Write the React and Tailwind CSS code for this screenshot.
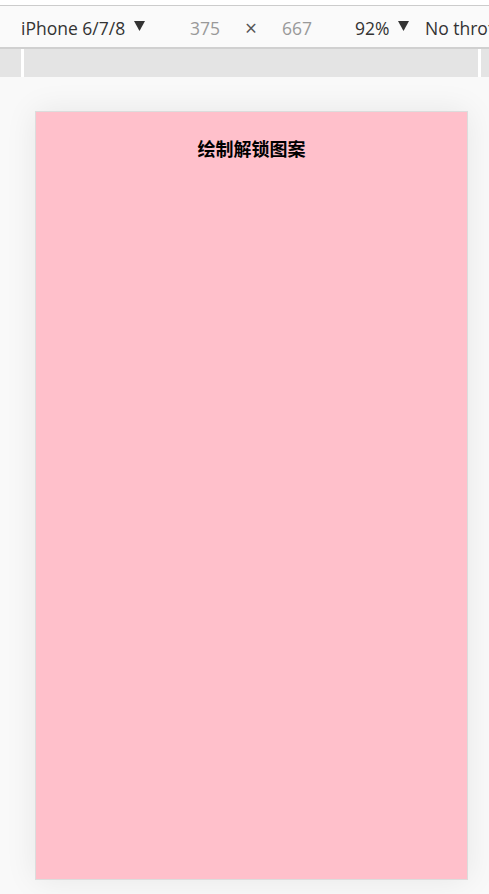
import React from "react";

function Tri() {
  return (
    <svg width="11" height="10" viewBox="0 0 11 10" className="inline-block ml-[9px] relative -top-[2px]">
      <polygon points="0,0 11,0 5.5,10" fill="#333" />
    </svg>
  );
}

export default function App() {
  return (
    <div className="w-[489px] h-[894px] overflow-hidden bg-[#f9f9f9] flex flex-col" style={{ fontFamily: '"Open Sans", "Noto Sans", sans-serif' }}>
      <div className="h-[5px] bg-white shrink-0" />
      <div className="h-[1px] bg-[#cccccc] shrink-0" />
      <div className="h-[41px] pt-[3px] bg-[#fafafa] shrink-0 flex items-center whitespace-nowrap text-[17.5px] text-[#333] overflow-hidden">
        <span className="ml-[21px] w-[169px] shrink-0 flex items-center">iPhone 6/7/8<Tri /></span>
        <span className="w-[55px] shrink-0 text-[#999]">375</span>
        <span className="w-[37px] shrink-0 text-[#555] text-[21px] leading-none">×</span>
        <span className="w-[73px] shrink-0 text-[#999]">667</span>
        <span className="w-[70px] shrink-0 flex items-center">92%<Tri /></span>
        <span className="shrink-0">No throttling</span>
      </div>
      <div className="h-[2px] bg-[#d0d0d0] shrink-0" />
      <div className="h-[28px] bg-[#e4e4e4] shrink-0 flex">
        <div className="w-[21px] shrink-0" />
        <div className="w-[3px] bg-white shrink-0" />
        <div className="flex-1" />
        <div className="w-[3px] bg-white shrink-0" />
        <div className="w-[8px] shrink-0" />
      </div>
      <div className="flex-1 pt-[34px] pl-[35px]">
        <div className="w-[433px] h-[769px] bg-[#ffc0cb] border border-[#dcdcdc] shadow-[0_0_30px_rgba(0,0,0,0.08)] flex flex-col items-center">
          <div className="mt-[24px] text-[18px] font-bold text-black leading-[24px]" style={{ fontFamily: '"Noto Sans CJK SC", sans-serif' }}>绘制解锁图案</div>
        </div>
      </div>
    </div>
  );
}
